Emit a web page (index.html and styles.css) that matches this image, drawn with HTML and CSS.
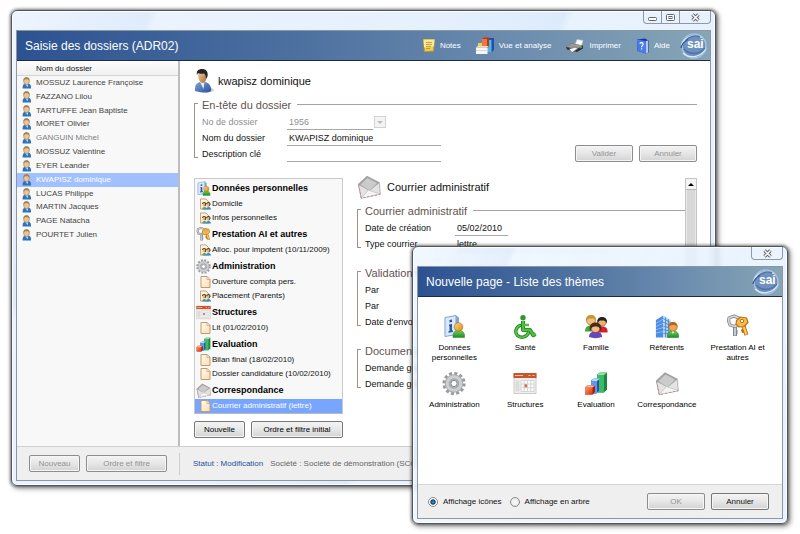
FILE: index.html
```html
<!DOCTYPE html>
<html lang="fr">
<head>
<meta charset="utf-8">
<title>Saisie des dossiers (ADR02)</title>
<link rel="stylesheet" href="styles.css">
</head>
<body>
<svg class="defs" aria-hidden="true">
  <defs>
    <linearGradient id="gNavy" x1="0" y1="0" x2="1" y2="1"><stop offset="0" stop-color="#7ea4dc"/><stop offset="1" stop-color="#2b4f9a"/></linearGradient>
    <linearGradient id="gSkin" x1="0" y1="0" x2="1" y2="1"><stop offset="0" stop-color="#f3d2a0"/><stop offset="1" stop-color="#a8692f"/></linearGradient>
    <linearGradient id="gGreen" x1="0" y1="0" x2="0" y2="1"><stop offset="0" stop-color="#6fd05a"/><stop offset="1" stop-color="#1f8a2a"/></linearGradient>
    <linearGradient id="gGold" x1="0" y1="0" x2="1" y2="1"><stop offset="0" stop-color="#ffd67a"/><stop offset="1" stop-color="#d88a12"/></linearGradient>
    <linearGradient id="gPage" x1="0" y1="0" x2="1" y2="1"><stop offset="0" stop-color="#fffdf6"/><stop offset="1" stop-color="#fbdcae"/></linearGradient>
    <linearGradient id="gRed" x1="0" y1="0" x2="1" y2="1"><stop offset="0" stop-color="#ff9a5c"/><stop offset="1" stop-color="#d8320e"/></linearGradient>
  </defs>

  <symbol id="user" viewBox="0 0 12 14">
    <path d="M1.500 13.500c-.5-3.500 1-5.500 3-6h3.500c2.500.5 3.600 2.500 3.300 6z" fill="#2a74c0"/>
    <path d="M5 8.500 7 12l1-3.500z" fill="#cfe6f8"/>
    <rect x="2.800" y=".8" width="6.400" height="8" rx="3" fill="#e8c597" stroke="#9a7c4e" stroke-width=".7"/>
    <path d="M2.500 5C2 2 3.500.4 6 .4S10 2 9.500 5C9 3 8 2.600 6 2.600S3 3 2.500 5z" fill="#a08354"/>
  </symbol>
  <symbol id="person" viewBox="0 0 20 24">
    <ellipse cx="12" cy="21" rx="8" ry="2.500" fill="#c9ccd6"/>
    <path d="M1 22c-.5-5 1-8 5-9h5c4.500 1 6.500 4.500 6 9-3 2-8 2-16 0z" fill="url(#gNavy)"/>
    <path d="m6 13 3.500 7 1-7z" fill="#e7eefb"/>
    <path d="M4 5c0 5 2 9 4.500 9s4-3 4.200-7l-1-4H5z" fill="url(#gSkin)"/>
    <path d="M3 6C2 2 4.500 0 8 0c4 0 6.500 2.500 5.500 7.500L12 10c-.2-3-.5-4.500-2-5.500C7 5 5 4.500 4 4z" fill="#24252a"/>
  </symbol>
  <symbol id="info" viewBox="0 0 24 24">
    <path d="M3 3 14 1v19L3 22z" fill="#dbe8f8" stroke="#7fa3d2"/>
    <path d="m14 1 3 2v16l-3 1z" fill="#7ba6de"/>
    <path d="M7.500 5.500 10 5v2.500l-2.500.4zM7 10l3-.5V16l1 .1v1.500l-4.500.7v-1.500l1-.3v-5H7z" fill="#2458a8"/>
    <path d="M11 23c-.5-4 1-6 3.500-7h4c3 1 4.500 3 4 7z" fill="url(#gGreen)" stroke="#3a8e36" stroke-width=".6"/>
    <circle cx="16.500" cy="12.500" r="4.300" fill="url(#gGold)" stroke="#9c6420" stroke-width=".6"/>
  </symbol>
  <symbol id="health" viewBox="0 0 24 24">
    <circle cx="10" cy="3.200" r="2.700" fill="#2f9a2c"/>
    <path d="M10 6.500v9h7l3.200 5.200 2.400-1.200" fill="none" stroke="#1f8425" stroke-width="4" stroke-linejoin="round"/>
    <path d="M7 11c-4.500 2-5.500 7-2.500 10 4 3.300 9.500 1.500 11-3" fill="none" stroke="#1f8425" stroke-width="3.400" stroke-linecap="round"/>
    <path d="M10 6.500v9h7l3.200 5.200 2.400-1.200M10 10.500h6" fill="none" stroke="#4fc03e" stroke-width="2.300" stroke-linejoin="round"/>
    <path d="M7 11c-4.500 2-5.500 7-2.500 10 4 3.300 9.500 1.500 11-3" fill="none" stroke="#5cc84a" stroke-width="1.600" stroke-linecap="round"/>
  </symbol>
  <symbol id="family" viewBox="0 0 24 24">
    <path d="M1 17c0-4 2-6 6-6s5 2 5 6z" fill="#4aa53c"/>
    <path d="M13 18c0-5 2-6 5-6 4 0 6 2 5.500 6z" fill="#d3202c"/>
    <circle cx="7" cy="6" r="4.500" fill="#eebf80" stroke="#8a5a1e" stroke-width=".6"/>
    <path d="M2 7C1.500 2 4 .5 7 .5S12.500 2 12 7C11 3.500 9 4 7 4S3 4 2 7z" fill="#c9962e"/>
    <circle cx="18" cy="7.500" r="4.200" fill="#e9b070" stroke="#6a3d14" stroke-width=".6"/>
    <path d="M13.500 9c-1-4.500 1.500-6.500 4.500-6.500s5.800 2 4.800 6.500c-1-3-2.500-3-4.800-3-2.500 0-3.500.5-4.500 3z" fill="#232323"/>
    <path d="M5 22.500c0-4 2.500-5.500 6.500-5.500s6.500 1.500 6.500 5.500c-4 1.500-9 1.500-13 0z" fill="#6b46b8"/>
    <circle cx="11.500" cy="13.500" r="4.500" fill="#efbd86" stroke="#5c3512" stroke-width=".6"/>
    <path d="M6 17C4.500 10 8 8 11.500 8s7 2 5.500 9c-1-4-2.500-5-5.500-5S7.200 13 6 17z" fill="#4e2b15"/>
  </symbol>
  <symbol id="referents" viewBox="0 0 26 26">
    <path d="M1 6 9 1v24H1z" fill="#4b8de0"/>
    <path d="m9 1 8 5v19H9z" fill="#b9d8f8"/>
    <path d="M1 9.500 9 5M1 13l8-3.500M1 16.500 9 14M1 20l8-1.500" stroke="#8fbcf2"/>
    <path d="m9 4.500 8 4.500M9 8.500l8 3.500M9 12.500l8 2.500M9 16.500l8 1.500M9 20.500h8M11.500 3v22M14.500 5v20" stroke="#4a86ce"/>
    <path d="M13.500 25c-.5-4.500 1.500-6.500 4-7h3.500c3 .5 5 2.500 4.500 7z" fill="url(#gGreen)" stroke="#237a28" stroke-width=".6"/>
    <path d="m18 18 1.500 3 1.500-3z" fill="#fff"/>
    <circle cx="19.500" cy="13.500" r="4.600" fill="#eda552" stroke="#94561a" stroke-width=".7"/>
    <path d="M14.800 13c-.5-3 1.700-5 4.700-5s5.200 2 4.700 5c-2-2.200-7-2.200-9.400 0z" fill="#b8661d"/>
  </symbol>
  <symbol id="keys" viewBox="0 0 24 24">
    <path d="M9 11v10.500M9 17.500h2.500" fill="none" stroke="#7d7f84" stroke-width="4"/>
    <path d="M9 11v10" fill="none" stroke="#c9cbcf" stroke-width="2.200"/>
    <path d="M3 3.500 8 1.500l4.500 2v6L9 12l-5-1.500-1.500-4z" fill="none" stroke="#85878c" stroke-width="3.200" stroke-linejoin="round"/>
    <path d="M3 3.500 8 1.500l4.500 2v6L9 12l-5-1.500-1.500-4z" fill="none" stroke="#d4d6da" stroke-width="1.600" stroke-linejoin="round"/>
    <path d="m17 10 3.500 10.500M18 16l-2.500 1" fill="none" stroke="#b46f10" stroke-width="4"/>
    <path d="m17 10 3.300 10" fill="none" stroke="#ffc95c" stroke-width="2.300"/>
    <path d="m10.500 6 4-3.500 6 1 1.500 4.500-4 4-5 .5-3-3z" fill="#f9bb4b" stroke="#b9740f" stroke-width="1.200" stroke-linejoin="round"/>
    <circle cx="16" cy="6.500" r="1.700" fill="#fff" stroke="#b9740f"/>
  </symbol>
  <symbol id="gear" viewBox="0 0 24 24">
    <circle cx="12" cy="12" r="9.800" fill="none" stroke="#97999e" stroke-width="3.600" stroke-dasharray="2.900 2.230"/>
    <circle cx="12" cy="12" r="6.300" fill="none" stroke="#a9abb0" stroke-width="6"/>
    <circle cx="12" cy="12" r="6.800" fill="none" stroke="#cdcfd3" stroke-width="3"/>
    <circle cx="12" cy="12" r="3.100" fill="#fff" stroke="#85878b"/>
  </symbol>
  <symbol id="calendar" viewBox="0 0 24 24">
    <path d="M1 2h22v20H1z" fill="#f1efee" stroke="#cfcac6"/>
    <path d="M.5 1.500h23v5H.5z" fill="#c9552a"/>
    <path d="M2 4h8M15.500 4h2M19.500 4h2" stroke="#f3c5b0" stroke-width="1.200"/>
    <path d="M2.500 9h4v11h-4z" fill="#dcdcdc"/>
    <path d="M8 9h13v11H8zM11.200 9v11M14.500 9v11M17.800 9v11M8 12.500h13M8 16.200h13" fill="#fbfbfb" stroke="#d6d6d6"/>
    <path d="M11.500 12.800h2.600v3h-2.600z" fill="#e8674a"/>
  </symbol>
  <symbol id="chart" viewBox="0 0 24 24">
    <path d="M13 3 16 1h7v17l-3 3h-7z" fill="#1d8742"/><path d="M13 3.500h7V21h-7z" fill="#3fba64"/><path d="m13 3.500 3-2.500h7l-3 2.500z" fill="#8fe0a5"/>
    <path d="M7 9l3-2h5v12l-3 3H7z" fill="#1d56ad"/><path d="M7 9.500h6V22H7z" fill="#5c9ae8"/><path d="m7 9.500 3-2.500h6l-3 2.500z" fill="#b9d8fb"/>
    <path d="m1 16 2-2h8v6l-2 3H1z" fill="#a8200c"/><path d="M1 16h7.500v7H1z" fill="url(#gRed)"/><path d="m1 16 2.500-2H11l-2.500 2z" fill="#ffb48e"/>
  </symbol>
  <symbol id="mail" viewBox="0 0 24 24">
    <path d="M1 9 10 .8 22 7l1.500 12.500L4 23.500z" fill="#a2a2a2"/>
    <path d="m3.500 9.500 7-6.500 9.500 5-7.500 8z" fill="#cbcbcb"/>
    <path d="m1.500 9.500 11 6L22.500 7.500l.7 11.600L4.300 23z" fill="#e3e3e3" stroke="#a5a5a5" stroke-width=".7"/>
    <path d="m4.300 23 7-8 11.900 4.100" fill="#f3f3f3" stroke="#bdbdbd" stroke-width=".7"/>
    <path d="m1.500 9.500 2.800 13.700 19-4" fill="none" stroke="#c08a88" stroke-dasharray="2 2"/>
  </symbol>
  <symbol id="page" viewBox="0 0 10 12">
    <path d="M.5.500h6l3 3v8h-9z" fill="url(#gPage)" stroke="#c39a68"/><path d="M6.500.500v3h3z" fill="#fff" stroke="#c39a68" stroke-width=".7"/>
  </symbol>
  <symbol id="people" viewBox="0 0 12 12">
    <path d="M.5.500h6l3 3v8h-9z" fill="url(#gPage)" stroke="#c39a68"/>
    <path d="M2.500 12c0-3.500 4.500-3.500 4.500 0z" fill="#3aa58c"/><path d="M6.500 12c0-3.800 5.500-3.800 5.500 0z" fill="#2d8fc4"/>
    <circle cx="4.700" cy="6.800" r="2" fill="#e9b984"/><circle cx="9" cy="6.800" r="2" fill="#e9b984"/>
    <path d="M2.700 6C3 3.800 6 3.900 6.300 6L5.500 8M7.300 6c.4-2.200 3.400-2.100 3.700.2L10 8" fill="none" stroke="#4f3a2c" stroke-width="1.200"/>
  </symbol>
  <symbol id="note" viewBox="0 0 13 13">
    <path d="M1.500.500h11l-1 11.500-9 .5z" fill="#f1cf57" stroke="#c79a26"/><path d="M1.500.500h11l-.6 7-9.800 1z" fill="#fbe994"/>
    <path d="M4 3.500h6M4 5.500h6M4 7.500h5M4 9.500h4" stroke="#b28d2d" stroke-width=".8"/>
  </symbol>
  <symbol id="analysis" viewBox="0 0 18 17">
    <path d="m11 3 2-2h5v12l-2 2h-5z" fill="#1a55a8"/><path d="M11 3h4.500v12H11z" fill="#55b2ea"/>
    <path d="m6 2 2-1.500h5V9l-1 2H6z" fill="#b83a12"/><path d="M6 2h5v9H6z" fill="#f0783a"/>
    <path d="M2 6h4v4H2z" fill="#f4d050"/>
    <path d="M0 10.500h11.500V17H0z" fill="#f7f7f5"/><path d="M0 13.500h11.500" stroke="#ddd8cc"/><path d="m0 10.500 1.500-1.500h11l-1 1.500z" fill="#e3dfd4"/>
  </symbol>
  <symbol id="printer" viewBox="0 0 18 14">
    <path d="m9 6 2-5.500 6 1L15 8z" fill="#fafafa" stroke="#c6c6c6" stroke-width=".6"/>
    <path d="m0 8 5-3.500 12 2v3L11 13 1 10.500z" fill="#303236"/><path d="m0 8 5-3.500 12 2L11 10z" fill="#9c9a8c"/>
    <path d="m3 10 6-1.800 3 1.300L6 13.500z" fill="#f4f4f4" stroke="#555" stroke-width=".5"/><path d="m14 9 2-1" stroke="#62c158"/>
  </symbol>
  <symbol id="help" viewBox="0 0 13 16">
    <path d="m1 1.500 8-1 3.500 2v12L10 15.500 1.500 13z" fill="#1c389d"/><path d="m1 1.500 9 1.500v12.500L1.500 13z" fill="#4b7bea"/><path d="m10 3 2-.5v12l-2 1z" fill="#b9c8ee"/>
    <path d="M4 5.800C4.200 4 7.400 4.400 7 6.500 6.800 7.600 5.600 7.700 5.600 9.200M5.600 10.300v1.300" fill="none" stroke="#fff" stroke-width="1.200"/>
  </symbol>
  <symbol id="globe" viewBox="0 0 28 28">
    <circle cx="14" cy="14" r="12" fill="#6f91bb" stroke="#a9c1df" stroke-width="1.600"/>
    <path d="M1.500 13C4 5 14 1 22 5.500M3 21c7 6.500 19 4 23-5" fill="none" stroke="#dce8f6" stroke-width="1.300"/>
    <path d="M4 17c5 6 15 6 21-1M6 8c4-4 10-5 14-3" fill="none" stroke="#4c76b0" stroke-width="1.600"/>
    <path d="M1 16c1-4 4-7 7-8.500" fill="none" stroke="#2f5792" stroke-width="1.300"/>
  </symbol>
</svg>

<div class="desktop">
  <main class="window window-main">
    <div class="titlebar">
      <div class="controls">
        <button type="button" aria-label="Réduire"><svg width="11" height="9"><rect x="1.500" y="4.500" width="8" height="3" rx="1" fill="#fff" stroke="#5c6470"/></svg></button>
        <button type="button" aria-label="Agrandir"><svg width="11" height="9"><rect x="1.500" y="1.500" width="8" height="6" rx="1" fill="#fff" stroke="#5c6470"/><rect x="4" y="3.500" width="3" height="2" fill="#fff" stroke="#5c6470"/></svg></button>
        <button type="button" class="close" aria-label="Fermer"><svg width="11" height="9"><path d="m2.500 1.500 6 6m0-6-6 6" stroke="#5c6470" stroke-width="3.400"/><path d="m2.500 1.500 6 6m0-6-6 6" stroke="#fff" stroke-width="1.500"/></svg></button>
      </div>
    </div>
    <div class="client">
      <header class="banner">
        <h1>Saisie des dossiers (ADR02)</h1>
        <nav class="tools">
          <button type="button"><svg width="13" height="13"><use href="#note"/></svg>Notes</button>
          <button type="button"><svg width="18" height="17"><use href="#analysis"/></svg>Vue et analyse</button>
          <button type="button"><svg width="18" height="14"><use href="#printer"/></svg>Imprimer</button>
          <button type="button"><svg width="13" height="16"><use href="#help"/></svg>Aide</button>
        </nav>
        <svg class="logo" width="28" height="28"><use href="#globe"/><text x="7" y="16">sai</text></svg>
      </header>
      <div class="workspace">
        <aside class="sidebar">
          <h2>Nom du dossier</h2>
          <ul>
            <li><svg><use href="#user"/></svg>MOSSUZ Laurence Françoise</li>
            <li><svg><use href="#user"/></svg>FAZZANO Lilou</li>
            <li><svg><use href="#user"/></svg>TARTUFFE Jean Baptiste</li>
            <li><svg><use href="#user"/></svg>MORET Olivier</li>
            <li class="muted"><svg><use href="#user"/></svg>GANGUIN Michel</li>
            <li><svg><use href="#user"/></svg>MOSSUZ Valentine</li>
            <li><svg><use href="#user"/></svg>EYER Leander</li>
            <li class="selected"><svg><use href="#user"/></svg>KWAPISZ dominique</li>
            <li><svg><use href="#user"/></svg>LUCAS Philippe</li>
            <li><svg><use href="#user"/></svg>MARTIN Jacques</li>
            <li><svg><use href="#user"/></svg>PAGE Natacha</li>
            <li><svg><use href="#user"/></svg>POURTET Julien</li>
          </ul>
        </aside>
        <section class="record">
          <div class="record-title"><svg width="20" height="24"><use href="#person"/></svg><h2>kwapisz dominique</h2></div>
          <section class="group">
            <h3>En-tête du dossier</h3>
            <div class="group-body">
              <div class="fields">
                <div class="field disabled"><label for="no">No de dossier</label><select id="no" class="short" disabled><option>1956</option></select><span class="arrow"></span></div>
                <div class="field"><label for="nom">Nom du dossier</label><input id="nom" type="text" value="KWAPISZ dominique"></div>
                <div class="field"><label for="desc">Description clé</label><input id="desc" type="text"></div>
              </div>
              <div class="actions"><button class="btn" type="button" disabled>Valider</button><button class="btn" type="button" disabled>Annuler</button></div>
            </div>
          </section>
          <div class="detail">
            <div class="pages">
              <ul class="tree">
                <li class="cat"><svg><use href="#info"/></svg>Données personnelles</li>
                <li><svg><use href="#people"/></svg>Domicile</li>
                <li><svg><use href="#people"/></svg>Infos personnelles</li>
                <li class="cat"><svg><use href="#keys"/></svg>Prestation AI et autres</li>
                <li><svg><use href="#people"/></svg>Alloc. pour impotent (10/11/2009)</li>
                <li class="cat"><svg><use href="#gear"/></svg>Administration</li>
                <li><svg><use href="#page"/></svg>Ouverture compta pers.</li>
                <li><svg><use href="#people"/></svg>Placement (Parents)</li>
                <li class="cat"><svg><use href="#calendar"/></svg>Structures</li>
                <li><svg><use href="#page"/></svg>Lit (01/02/2010)</li>
                <li class="cat"><svg><use href="#chart"/></svg>Evaluation</li>
                <li><svg><use href="#page"/></svg>Bilan final (18/02/2010)</li>
                <li><svg><use href="#page"/></svg>Dossier candidature (10/02/2010)</li>
                <li class="cat"><svg><use href="#mail"/></svg>Correspondance</li>
                <li class="selected"><svg><use href="#page"/></svg>Courrier administratif (lettre)</li>
              </ul>
              <div class="pages-actions"><button class="btn" type="button">Nouvelle</button><button class="btn grow" type="button">Ordre et filtre initial</button></div>
            </div>
            <div class="sheet">
              <div class="sheet-content">
                <div class="sheet-title"><svg width="24" height="24"><use href="#mail"/></svg><h2>Courrier administratif</h2></div>
                <section class="group">
                  <h3>Courrier administratif</h3>
                  <div class="fields">
                    <div class="field"><label for="date">Date de création</label><input id="date" class="date" type="text" value="05/02/2010"></div>
                    <div class="field"><label for="type">Type courrier</label><input id="type" type="text" value="lettre"></div>
                  </div>
                </section>
                <section class="group">
                  <h3>Validation/Envoi</h3>
                  <div class="fields">
                    <div class="field"><label for="par1">Par</label><input id="par1" type="text"></div>
                    <div class="field"><label for="par2">Par</label><input id="par2" type="text"></div>
                    <div class="field"><label for="envoi">Date d'envoi</label><input id="envoi" class="date" type="text"></div>
                  </div>
                </section>
                <section class="group">
                  <h3>Documents</h3>
                  <div class="fields">
                    <div class="field"><label for="dem1">Demande générée</label><input id="dem1" type="text"></div>
                    <div class="field"><label for="dem2">Demande générée</label><input id="dem2" type="text"></div>
                  </div>
                </section>
              </div>
              <div class="scrollbar"><button type="button" aria-label="Défiler vers le haut"><svg width="6" height="3"><path d="M0 3 3 0l3 3z"/></svg></button></div>
            </div>
          </div>
        </section>
      </div>
      <footer class="statusbar">
        <div class="side-actions"><button class="btn" type="button" disabled>Nouveau</button><button class="btn wide" type="button" disabled>Ordre et filtre</button></div>
        <p><strong>Statut : Modification</strong><span>Société : Société de démonstration (SCC)</span></p>
      </footer>
    </div>
  </main>

  <div class="window window-dialog" role="dialog" aria-labelledby="dialog-title">
    <div class="titlebar">
      <div class="controls">
        <button type="button" class="close" aria-label="Fermer"><svg width="11" height="9"><path d="m2.500 1.500 6 6m0-6-6 6" stroke="#5c6470" stroke-width="3.400"/><path d="m2.500 1.500 6 6m0-6-6 6" stroke="#fff" stroke-width="1.500"/></svg></button>
      </div>
    </div>
    <div class="client">
      <header class="banner">
        <h1 id="dialog-title">Nouvelle page - Liste des thèmes</h1>
        <svg class="logo" width="28" height="28"><use href="#globe"/><text x="7" y="16">sai</text></svg>
      </header>
      <div class="themes">
        <button type="button"><svg><use href="#info"/></svg>Données personnelles</button>
        <button type="button"><svg><use href="#health"/></svg>Santé</button>
        <button type="button"><svg><use href="#family"/></svg>Famille</button>
        <button type="button"><svg><use href="#referents"/></svg>Référents</button>
        <button type="button"><svg><use href="#keys"/></svg>Prestation AI et autres</button>
        <button type="button"><svg><use href="#gear"/></svg>Administration</button>
        <button type="button"><svg><use href="#calendar"/></svg>Structures</button>
        <button type="button"><svg><use href="#chart"/></svg>Evaluation</button>
        <button type="button"><svg><use href="#mail"/></svg>Correspondance</button>
      </div>
      <footer class="dialog-footer">
        <label><input type="radio" name="view" checked>Affichage icônes</label>
        <label><input type="radio" name="view">Affichage en arbre</label>
        <div class="actions"><button class="btn" type="button" disabled>OK</button><button class="btn" type="button">Annuler</button></div>
      </footer>
    </div>
  </div>
</div>
</body>
</html>
```

FILE: styles.css
```css
* { box-sizing: border-box; }

body {
  margin: 0;
  background: #fff;
  color: #111;
  font: 8px/10px "Liberation Sans", Arial, sans-serif;
}

h1, h2, h3, p, ul { margin: 0; padding: 0; font-weight: normal; }
ul { list-style: none; }
svg { flex: none; display: block; }
button, input, select { font: inherit; color: inherit; margin: 0; padding: 0; border: 0; background: none; border-radius: 0; }

.defs { position: absolute; width: 0; height: 0; }
.logo text { font: bold 12px "Liberation Sans", Arial, sans-serif; fill: #fff; }

.desktop { position: relative; min-height: 100vh; overflow: hidden; }

/* Windows */
.window {
  position: absolute;
  display: flex;
  flex-direction: column;
  padding: 0 4px 4px;
  border: 1px solid #50565c;
  border-radius: 6px;
  box-shadow: inset 0 0 0 1px #fbfdff, 0 0 3px 1px rgba(0, 0, 0, .45), 2px 2px 5px 1px rgba(0, 0, 0, .35);
}
.window-main {
  inset: 10px 84px 48px 11px;
  background: linear-gradient(115deg, #eef5fe 0, #dfecfc 15%, #eaf3fe 16%, #e6f1fe 45%, #dcebfc 60%, #e9f3fe 61%, #e3effc 100%);
}
.window-dialog {
  inset: 246px 12px 10px 412px;
  background: linear-gradient(115deg, rgba(240, 247, 255, .85), rgba(222, 236, 252, .8) 20%, rgba(236, 245, 255, .85) 21%, rgba(226, 239, 253, .8));
  backdrop-filter: blur(2px);
}
.titlebar { display: flex; justify-content: flex-end; align-items: flex-start; height: 19px; }
.controls { display: flex; border: 1px solid #8d99a8; border-top: 0; border-radius: 0 0 4px 4px; }
.controls button { display: flex; align-items: center; justify-content: center; width: 18px; height: 12px; border-right: 1px solid #8d99a8; }
.controls .close { width: 30px; border-right: 0; }

.client { flex: 1; display: flex; flex-direction: column; min-height: 0; border: 1px solid #8e979f; background: #fff; }

.banner {
  display: flex;
  align-items: center;
  height: 30px;
  padding: 0 2px 0 8px;
  border-bottom: 1px solid #1f2c3d;
  background: linear-gradient(90deg, #2c5292, #4c709f 40%, #6a8bae 70%, #86a5b6);
  color: #fff;
}
.banner h1 { flex: 1; font-size: 12px; line-height: 14px; }
.tools { display: flex; gap: 15px; margin-right: 10px; }
.tools button { display: flex; align-items: center; gap: 5px; }

/* Buttons */
.btn {
  width: 58px;
  height: 17px;
  border: 1px solid #777;
  border-radius: 2px;
  background: linear-gradient(#f4f4f4, #e6e6e6 50%, #d3d3d3);
  box-shadow: inset 0 0 0 1px #f5f5f5;
  text-align: center;
}
.btn:disabled { color: #939393; border-color: #8d8d8d; }
.actions { display: flex; gap: 6px; margin-left: auto; }

/* Main window */
.workspace { flex: 1; display: flex; min-height: 0; }
.sidebar { width: 163px; border-right: 2px solid #bdbdbd; background: #f8f8f8; color: #444; }
.sidebar h2 {
  height: 15px;
  padding-left: 19px;
  border-bottom: 1px solid #d4d4d4;
  background: linear-gradient(#fdfdfd, #f1f1f1);
  color: #111;
  font-size: 8px;
  line-height: 15px;
}
.sidebar ul { display: grid; grid-auto-rows: 1fr; height: 166px; }
.sidebar li { display: flex; align-items: center; gap: 4px; padding-left: 4px; }
.sidebar li svg { width: 11px; height: 12px; }
.sidebar .muted { color: #808080; }
.sidebar .selected { background: #a0c0ff; color: #fff; }

.record { flex: 1; display: flex; flex-direction: column; min-width: 0; padding: 8px 13px 9px 14px; }
.record-title { display: flex; align-items: center; gap: 4px; margin-bottom: 6px; }
.record-title h2, .sheet-title h2 { font-size: 11px; line-height: 14px; }

.group { position: relative; padding-left: 8px; }
.group::before {
  content: "";
  position: absolute;
  inset: 4px auto 4px 0;
  width: 3px;
  border: 1px solid #a08f8b;
  border-right: 0;
}
.group h3 { display: flex; gap: 6px; margin-bottom: 3px; color: #5f5350; font-size: 11px; line-height: 12px; }
.group h3::after { content: ""; flex: 1; height: 5px; border-bottom: 1px solid #a9a09e; }
.group-body { display: flex; align-items: flex-end; }
.field { display: flex; height: 16px; font-size: 9px; line-height: 16px; }
.field label { width: 85px; white-space: nowrap; }
.field input, .field select { width: 154px; height: 16px; padding: 0 2px; border-bottom: 1px solid #a8a8a8; appearance: none; outline: 0; }
.field .short { width: 86px; opacity: 1; }
.field .date { width: 53px; }
.disabled { color: #8f8f8f; }
.arrow { display: grid; place-items: center; align-self: center; width: 12px; height: 12px; margin-left: 1px; border: 1px solid #d2d2d2; background: #f4f4f4; }
.arrow::after { content: ""; border: 3px solid transparent; border-top: 3px solid #bbb; border-bottom: 0; }

.detail { flex: 1; display: flex; gap: 14px; min-height: 0; margin-top: 14px; }
.pages { width: 149px; padding-top: 2px; }
.tree { border: 1px solid #c9c9c9; border-bottom-color: #bbb; background: #f8f8f8; }
.tree li { display: flex; align-items: center; gap: 1px; height: 14px; padding-left: 5px; white-space: nowrap; }
.tree li svg { width: 11px; height: 12px; }
.tree .cat { height: 18px; padding-left: 1px; color: #000; font-size: 9px; font-weight: bold; }
.tree .cat svg { width: 15px; height: 15px; }
.tree .selected { background: #78a5ff; color: #fff; }
.pages-actions { display: flex; gap: 6px; margin-top: 7px; color: #000; }
.pages-actions .btn { width: 51px; }
.pages-actions .grow { flex: 1; }

.sheet { flex: 1; display: flex; min-width: 0; margin-bottom: 24px; }
.sheet-content { flex: 1; min-width: 0; overflow: hidden; }
.sheet-title { display: flex; align-items: center; gap: 6px; height: 22px; margin-bottom: 7px; }
.sheet .group { margin-bottom: 15px; }
.sheet .field label { width: 90px; }
.scrollbar { width: 12px; margin-top: 2px; border: 1px solid #c4c4c4; background: #d8d8d8; box-shadow: inset 0 0 0 1px #e8e8e8; }
.scrollbar button { display: grid; place-items: center; width: 10px; height: 11px; border-bottom: 1px solid #b5b5b5; background: #f4f4f4; }

.statusbar { display: flex; align-items: center; height: 34px; border-top: 1px solid #cfcfcf; background: #efefef; }
.side-actions { display: flex; align-items: center; gap: 6px; width: 163px; height: 22px; padding-left: 12px; border-right: 1px solid #cdcdcd; }
.side-actions .btn { width: 51px; }
.side-actions .wide { width: 81px; }
.statusbar p { display: flex; gap: 7px; padding-left: 13px; color: #666; white-space: nowrap; }
.statusbar strong { color: #1d4f9c; font-weight: normal; }

/* Theme dialog */
.themes {
  flex: 1;
  display: grid;
  grid-template-columns: repeat(5, minmax(0, 1fr));
  grid-auto-rows: 46px;
  row-gap: 11px;
  align-content: start;
  padding: 17px 9px 0 1px;
}
.themes button { display: flex; flex-direction: column; align-items: center; gap: 4px; padding: 0 4px; color: #000; }
.themes svg { width: 24px; height: 25px; }
.dialog-footer { display: flex; align-items: center; gap: 8px; height: 34px; padding: 0 13px 0 10px; border-top: 1px solid #d6d6d6; background: #efefef; }
.dialog-footer label { display: flex; align-items: center; gap: 5px; }
.dialog-footer input { appearance: none; width: 10px; height: 10px; border: 1px solid #8b8b8b; border-radius: 50%; background: radial-gradient(#fff, #ddd); }
.dialog-footer input:checked { background: radial-gradient(circle, #35a0d8 0, #123f6e 40%, #fff 55%); }
```
